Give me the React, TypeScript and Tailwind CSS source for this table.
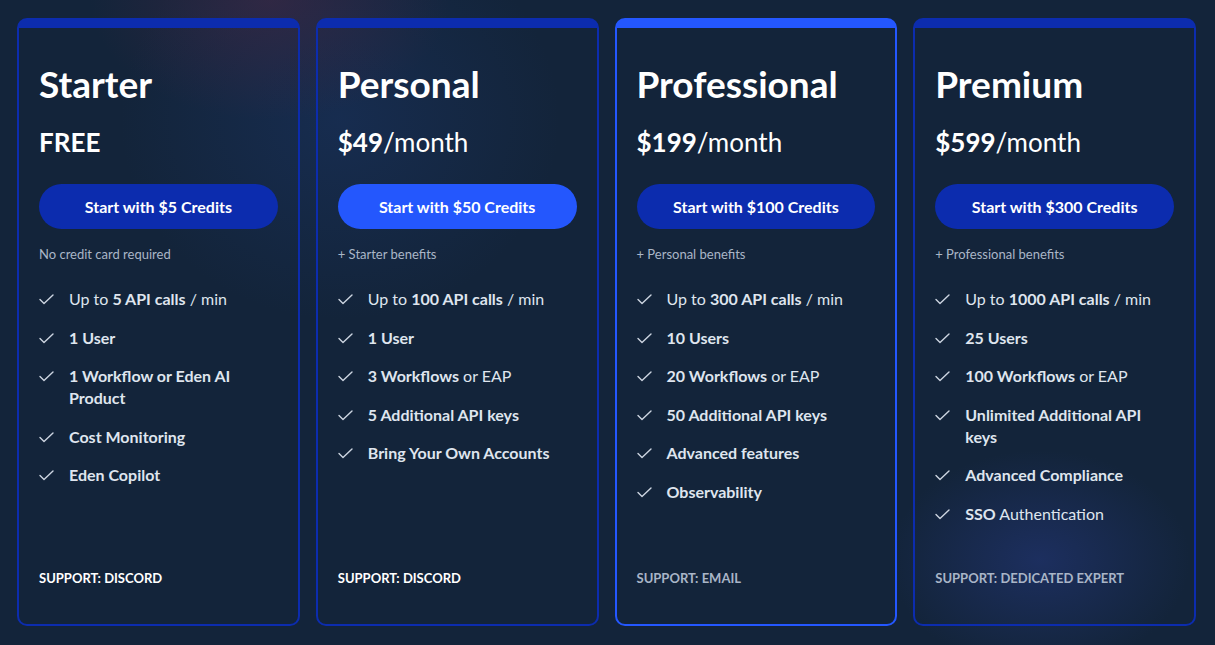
import React from "react";

type Part = { t: string; b?: boolean };

type Plan = {
	name: string;
	price: string;
	per?: string;
	cta: string;
	note: string;
	features: Part[][];
	support: string;
	highlight?: boolean;
	brightButton?: boolean;
	supportMuted?: boolean;
};

const plans: Plan[] = [
	{
		name: "Starter",
		price: "FREE",
		cta: "Start with $5 Credits",
		note: "No credit card required",
		features: [
			[{ t: "Up to " }, { t: "5 API calls", b: true }, { t: " / min" }],
			[{ t: "1 User", b: true }],
			[{ t: "1 Workflow or Eden AI Product", b: true }],
			[{ t: "Cost Monitoring", b: true }],
			[{ t: "Eden Copilot", b: true }],
		],
		support: "Support: Discord",
	},
	{
		name: "Personal",
		price: "$49",
		per: "/month",
		cta: "Start with $50 Credits",
		note: "+ Starter benefits",
		brightButton: true,
		features: [
			[{ t: "Up to " }, { t: "100 API calls", b: true }, { t: " / min" }],
			[{ t: "1 User", b: true }],
			[{ t: "3 Workflows", b: true }, { t: " or EAP" }],
			[{ t: "5 Additional API keys", b: true }],
			[{ t: "Bring Your Own Accounts", b: true }],
		],
		support: "Support: Discord",
	},
	{
		name: "Professional",
		price: "$199",
		per: "/month",
		cta: "Start with $100 Credits",
		note: "+ Personal benefits",
		highlight: true,
		supportMuted: true,
		features: [
			[{ t: "Up to " }, { t: "300 API calls", b: true }, { t: " / min" }],
			[{ t: "10 Users", b: true }],
			[{ t: "20 Workflows", b: true }, { t: " or EAP" }],
			[{ t: "50 Additional API keys", b: true }],
			[{ t: "Advanced features", b: true }],
			[{ t: "Observability", b: true }],
		],
		support: "Support: Email",
	},
	{
		name: "Premium",
		price: "$599",
		per: "/month",
		cta: "Start with $300 Credits",
		note: "+ Professional benefits",
		supportMuted: true,
		features: [
			[{ t: "Up to " }, { t: "1000 API calls", b: true }, { t: " / min" }],
			[{ t: "25 Users", b: true }],
			[{ t: "100 Workflows", b: true }, { t: " or EAP" }],
			[{ t: "Unlimited Additional API keys", b: true }],
			[{ t: "Advanced Compliance", b: true }],
			[{ t: "SSO", b: true }, { t: " Authentication" }],
		],
		support: "Support: Dedicated Expert",
	},
];

function CheckIcon() {
	return (
		<svg viewBox="0 0 15 11" className="w-[15px] h-[11px] mt-[6px] shrink-0" fill="none">
			<path d="M1 5.5 L5 9.5 L14 1" stroke="#cdd5e1" strokeWidth="1.4" strokeLinecap="round" strokeLinejoin="round" />
		</svg>
	);
}

function PlanCard({ plan }: { plan: Plan }) {
	return (
		<div
			className={
				"flex flex-col h-[608px] rounded-[10px] border-x-2 border-b-2 border-t-[10px] px-5 pt-8 " +
				(plan.highlight ? "border-[#2457ff]" : "border-[#0c2cae]")
			}
		>
			<h2 className="text-[37px] leading-[48px] font-bold text-white">{plan.name}</h2>
			<div className="mt-[18px] text-[26px] leading-[32px] text-white">
				<span className="font-bold">{plan.price}</span>
				{plan.per && <span>{plan.per}</span>}
			</div>
			<button
				className={
					"mt-[26px] h-[45px] w-full rounded-full text-[16px] font-bold text-white " +
					(plan.brightButton ? "bg-[#2457fd]" : "bg-[#0c2cae]")
				}
			>
				{plan.cta}
			</button>
			<p className="mt-4 text-[13px] leading-[18px] text-[#aab6c7]">{plan.note}</p>
			<ul className="mt-[25px] flex flex-col gap-[16.5px]">
				{plan.features.map((f, i) => (
					<li key={i} className="flex items-start gap-[15px] text-[16px] leading-[22px] text-[#dfe5ee]">
						<CheckIcon />
						<span>
							{f.map((p, j) => (
								<span key={j} className={p.b ? "font-bold" : "font-normal"}>
									{p.t}
								</span>
							))}
						</span>
					</li>
				))}
			</ul>
			<p
				className={
					"mt-auto pb-[37px] text-[13px] leading-[18px] font-bold uppercase " +
					(plan.supportMuted ? "text-[#a9b5c7]" : "text-white")
				}
			>
				{plan.support}
			</p>
		</div>
	);
}

export default function App() {
	return (
		<div className="min-h-[645px] w-[1215px] bg-[#13243a] bg-[radial-gradient(ellipse_180px_120px_at_270px_0px,rgba(70,40,70,0.55),transparent),radial-gradient(ellipse_220px_200px_at_340px_120px,rgba(30,60,120,0.35),transparent),radial-gradient(ellipse_150px_110px_at_1040px_560px,rgba(40,60,140,0.45),transparent)] font-['Lato',sans-serif] pl-[17px] pr-[19px] pt-[18px]">
			<div className="grid grid-cols-4 gap-4">
				{plans.map((p) => (
					<PlanCard key={p.name} plan={p} />
				))}
			</div>
		</div>
	);
}
